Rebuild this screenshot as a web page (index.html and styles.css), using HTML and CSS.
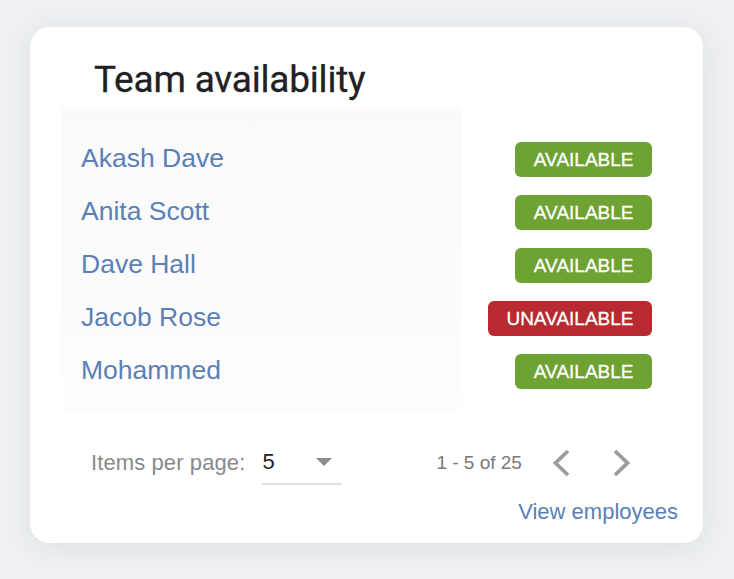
FILE: index.html
```html
<!DOCTYPE html>
<html>
<head>
<meta charset="utf-8">
<link rel="stylesheet" href="styles.css">
</head>
<body>
<div class="card">
  <h1 class="title">Team availability</h1>
  <div class="list">
    <div class="row"><a class="name">Akash Dave</a><span class="badge ok">AVAILABLE</span></div>
    <div class="row"><a class="name">Anita Scott</a><span class="badge ok">AVAILABLE</span></div>
    <div class="row"><a class="name">Dave Hall</a><span class="badge ok">AVAILABLE</span></div>
    <div class="row"><a class="name">Jacob Rose</a><span class="badge no">UNAVAILABLE</span></div>
    <div class="row"><a class="name">Mohammed</a><span class="badge ok">AVAILABLE</span></div>
  </div>
  <div class="pager">
    <span class="ipp">Items per page:</span>
    <div class="select"><span class="val">5</span><span class="caret"></span></div>
    <span class="range">1 - 5 of 25</span>
    <svg class="chev" width="24" height="30" viewBox="0 0 24 30"><path d="M18 3 L5.5 15 L18 27" fill="none" stroke="#9b9b9b" stroke-width="3.8"/></svg>
    <svg class="chev next" width="24" height="30" viewBox="0 0 24 30"><path d="M6 3 L18.5 15 L6 27" fill="none" stroke="#9b9b9b" stroke-width="3.8"/></svg>
  </div>
  <div class="links"><a class="view">View employees</a></div>
</div>
</body>
</html>
```
FILE: styles.css
```css
html, body {
  margin: 0;
  padding: 0;
}
body {
  width: 734px;
  height: 579px;
  background: #eef0f3;
  font-family: "Liberation Sans", Arial, sans-serif;
  overflow: hidden;
  padding-top: 27px;
  padding-left: 30px;
  box-sizing: border-box;
}
.card {
  width: 673px;
  height: 516px;
  background: #fff;
  border-radius: 20px;
  box-shadow: 0 4px 30px rgba(40, 50, 80, 0.08);
  box-sizing: border-box;
  padding-top: 31px;
}
.title {
  margin: 0 0 6px 64px;
  font-family: Roboto, "Liberation Sans", sans-serif;
  font-weight: 400;
  font-size: 37px;
  line-height: 44px;
  letter-spacing: -0.2px;
  color: #202124;
  -webkit-text-stroke: 0.3px #202124;
}
.list {
  margin-left: 32px;
  width: 590px;
  padding: 24px 0 14px 0;
  background: linear-gradient(#fafafa, #fdfdfd) no-repeat;
  background-size: 400px 100%;
}
.row {
  height: 53px;
  display: flex;
  align-items: center;
  justify-content: space-between;
  padding-left: 19px;
}
.name {
  font-size: 26.5px;
  color: #5a80b6;
}
.badge {
  height: 35px;
  line-height: 35px;
  padding: 0 18.5px;
  border-radius: 6px;
  color: #fff;
  font-size: 19px;
  -webkit-text-stroke: 0.3px #fff;
  margin-top: 1px;
}
.ok { background: #6ea233; }
.no { background: #b82a30; }
.pager {
  margin-top: 30px;
  height: 44px;
  display: flex;
  align-items: center;
  padding-left: 61px;
}
.ipp {
  font-size: 22px;
  letter-spacing: 0.1px;
  color: #8a8a8a;
}
.select {
  margin-left: 17px;
  width: 80px;
  height: 44px;
  box-sizing: border-box;
  border-bottom: 2px solid #e0e0e0;
  display: flex;
  align-items: center;
  justify-content: space-between;
  padding-right: 10px;
}
.val {
  font-size: 22px;
  color: #222;
}
.caret {
  width: 0;
  height: 0;
  border-left: 8px solid transparent;
  border-right: 8px solid transparent;
  border-top: 8px solid #8e8e8e;
}
.range {
  margin-left: 94px;
  font-size: 19px;
  color: #7a7a7a;
}
.chev {
  margin-left: 28px;
}
.chev.next {
  margin-left: 35px;
}
.links {
  margin-top: 15px;
  display: flex;
  justify-content: flex-end;
  padding-right: 25px;
}
.view {
  font-size: 22px;
  line-height: 24px;
  color: #5a80b6;
}
```
